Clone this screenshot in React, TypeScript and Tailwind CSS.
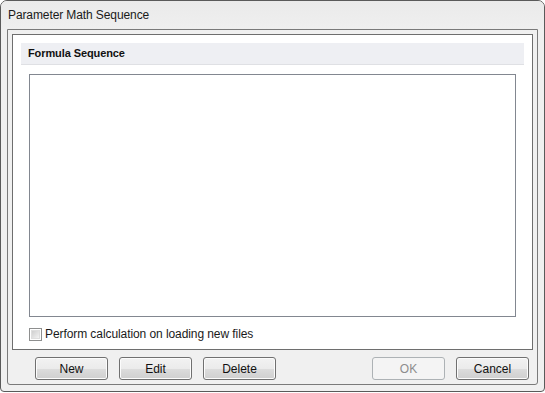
import React from "react";

const font = { fontFamily: '"Liberation Sans", Arial, sans-serif' };

function Btn({ label, disabled }: { label: string; disabled?: boolean }) {
  return (
    <button
      className={
        disabled
          ? "w-[73px] h-[23px] rounded-[3px] border border-[#adb2b5] bg-[#f4f4f4] text-[12px] text-[#8d8d8d] leading-none"
          : "w-[73px] h-[23px] rounded-[3px] border border-[#707070] bg-[linear-gradient(to_bottom,#f2f2f2_0%,#ebebeb_50%,#dddddd_50%,#cfcfcf_100%)] text-[12px] text-[#111] leading-none shadow-[inset_0_0_0_1px_#fcfcfc]"
      }
    >
      {label}
    </button>
  );
}

export default function App() {
  return (
    <div className="w-[545px] h-[393px] bg-white" style={font}>
      <div className="w-[545px] h-[392px] border border-[#5a5a5a] rounded-t-[7px] rounded-b-[4px] bg-[#f0f0f0] flex flex-col overflow-hidden">
        <div className="h-[28px] flex items-center pl-[7px] text-[12px] tracking-[-0.1px] text-[#1a1a1a] bg-[linear-gradient(to_bottom,#eaeaea,#efefef)]">
          Parameter Math Sequence
        </div>
        <div className="mx-[6px] h-[356px] border border-[#7a7a7a] rounded-b-[3px] p-[4px] flex flex-col">
          <div className="h-[317px] border border-[#6e6e6e] bg-white px-[8px] pt-[8px] flex flex-col">
            <div className="h-[22px] bg-[#eeeff3] border-b border-[#dfe0e4] flex items-center pl-[7px] text-[11px] font-bold text-[#111] tracking-[-0.1px]">
              Formula Sequence
            </div>
            <div className="mx-[8px] mt-[9px] h-[243px] border border-[#828790] bg-white" />
            <label className="flex items-center mt-[10px] ml-[8px] gap-[3px] text-[12px] leading-[14px] tracking-[-0.08px] text-[#1a1a1a]">
              <span className="w-[13px] h-[13px] border border-[#8e8f8f] bg-white flex items-center justify-center">
                <span className="w-[9px] h-[9px] bg-[linear-gradient(135deg,#cfcfcf,#f2f2f2)] border border-[#dedede]" />
              </span>
              Perform calculation on loading new files
            </label>
          </div>
          <div className="flex mt-[7px] pl-[23px] pr-[4px]">
            <div className="flex gap-[11px]">
              <Btn label="New" />
              <Btn label="Edit" />
              <Btn label="Delete" />
            </div>
            <div className="ml-auto flex gap-[11px]">
              <Btn label="OK" disabled />
              <Btn label="Cancel" />
            </div>
          </div>
        </div>
      </div>
    </div>
  );
}
